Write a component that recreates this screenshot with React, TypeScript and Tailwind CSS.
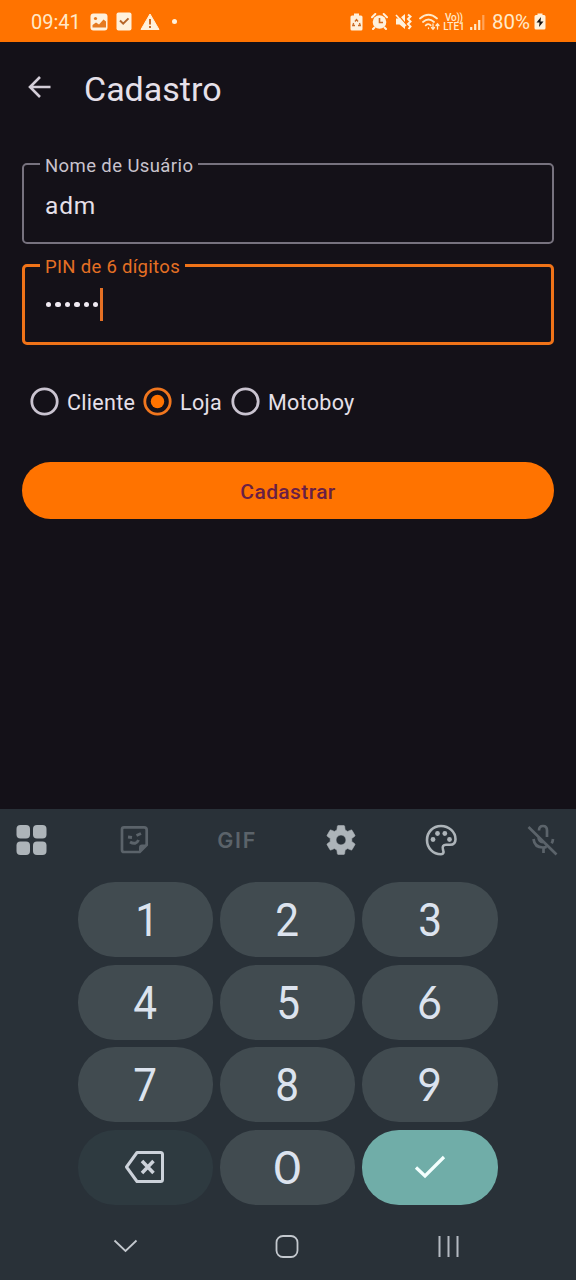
import { useState } from 'react';
import type { ReactNode } from 'react';

const roles = [
  { name: 'Cliente', className: 'w-[113px]' },
  { name: 'Loja', className: 'w-[88px]' },
  { name: 'Motoboy', className: '' },
];

const digits = [
  { label: '1', className: "scale-x-90 pl-[3px] font-['Roboto']" },
  { label: '2', className: "scale-x-90 font-['Roboto']" },
  { label: '3', className: "scale-x-90 font-['Roboto']" },
  { label: '4', className: "scale-x-90 font-['Roboto']" },
  { label: '5', className: "scale-x-90 pl-px font-['Roboto']" },
  { label: '6', className: "scale-x-90 pb-[2px] font-['Lato']" },
  { label: '7', className: "scale-x-90 font-['Roboto']" },
  { label: '8', className: "scale-x-90 font-['Roboto']" },
  { label: '9', className: "scale-x-90 pb-[2px] font-['Lato']" },
];

function StatusBar() {
  return (
    <div className="flex h-[42px] items-center bg-[#ff7300] pl-[31px] pr-[30px] pt-px text-[#ffe9c8]">
      <span className="w-[59px] text-[20px] leading-none">09:41</span>
      <svg className="mr-[8px] h-[18px] w-[18px]" viewBox="0 0 18 18">
        <rect x="0.500" y="0.500" width="17" height="17" rx="3" fill="#fff1dc" />
        <circle cx="5.500" cy="5.500" r="1.600" fill="#e57a20" />
        <path d="M2.500 14.500V12l3.500-2.500 3 2 4.500-5L16 8.500v6z" fill="#e57a20" />
      </svg>
      <svg className="mr-[8px] h-[19px] w-[16px]" viewBox="0 0 16 19">
        <rect x="0.500" y="0.500" width="15" height="18" rx="2" fill="#fff1dc" />
        <path d="M4 8.500l3.200 3.200 5.300-5.300" fill="none" stroke="#b5652a" strokeWidth="2" />
      </svg>
      <svg className="mr-[12px] h-[18px] w-[20px]" viewBox="0 0 20 18">
        <path d="M10 1l9 15.500H1z" fill="#fff1dc" stroke="#fff1dc" strokeLinejoin="round" />
        <path d="M10 6v5.500M10 13v2" stroke="#c96a24" strokeWidth="2" />
      </svg>
      <span className="h-[5px] w-[5px] rounded-full bg-[#fff1dc]" />

      <div className="ml-auto flex items-center">
        <svg className="mr-[8px] h-[18px] w-[13px]" viewBox="0 0 13 18">
          <path d="M4 0.500h5v2h2q1.500 0 1.500 1.500v12q0 1.500-1.500 1.500h-9q-1.500 0-1.500-1.500V4q0-1.500 1.500-1.500h2z" fill="#fff1dc" />
          <path d="M5 8.500l1.500-2 1.500 2M9.500 10l.8 2.500H8M5 12.500H2.800L3.600 10" fill="none" stroke="#c96a24" strokeWidth="1.300" />
        </svg>
        <svg className="mr-[7px] h-[17px] w-[17px]" viewBox="0 0 17 17">
          <circle cx="8.500" cy="9" r="6.800" fill="#fff1dc" />
          <path d="M1 4.200L4.300 1M16 4.200L12.700 1M3.500 14.500L2 16M13.500 14.500L15 16" stroke="#fff1dc" strokeWidth="2" strokeLinecap="round" />
          <path d="M8.500 5v4.500H12" fill="none" stroke="#d46b1c" strokeWidth="1.600" />
        </svg>
        <svg className="mr-[7px] h-[17px] w-[17px]" viewBox="0 0 17 17">
          <path d="M1 5.500h3.500L10 1v15l-5.500-4.500H1z" fill="#fff1dc" />
          <path d="M3 1.500l9 11" stroke="#ff7300" strokeWidth="1.200" />
          <path d="M1 2l10 11" stroke="#fff1dc" strokeWidth="1.600" />
          <path d="M13 1.500l2.500 2-2.500 2.500 2.500 2.500L13 11l2.500 2.500L13.500 16" fill="none" stroke="#fff1dc" strokeWidth="2" />
        </svg>
        <svg className="mr-[3px] h-[18px] w-[21px]" viewBox="0 0 21 18" fill="none" stroke="#ffe9c8" strokeWidth="1.800" strokeLinecap="round">
          <path d="M1 5.500q8.500-7.500 17 0M4 9q5.500-5 11 0M6.700 12.300q2.800-2.500 5 0" />
          <path d="M9.500 15v.5M14 11v5M12.500 14.500l1.500 1.700 1.500-1.700M18.500 16v-5M17 12.500l1.500-1.700 1.500 1.700" strokeWidth="1.300" />
        </svg>
        <span className="mr-[5px] flex w-[22px] flex-col items-center text-[10px] font-medium leading-[9px]">
          <span className="tracking-[-0.300px]">Vo))</span>
          <span>LTE1</span>
        </span>
        <svg className="mr-[7px] h-[16px] w-[15px]" viewBox="0 0 15 16" strokeWidth="2.200">
          <path d="M1.200 16v-3M5.200 16v-6M9.200 16V6" stroke="#ffe9c8" />
          <path d="M13.300 16V1" stroke="#ffa45a" />
        </svg>
        <span className="mr-[4px] pt-[2px] text-[20.500px] leading-none">80%</span>
        <svg className="h-[17px] w-[12px]" viewBox="0 0 12 17">
          <path d="M3.500 0.500h5v1.500h1.500q1.500 0 1.500 1.500v11.500q0 1.500-1.500 1.500H2q-1.500 0-1.500-1.500V3.500Q.5 2 2 2h1.500z" fill="#fff1dc" />
          <path d="M7 4L2.500 9.500h3L5 14l4.500-5.500h-3z" fill="#1b1410" />
        </svg>
      </div>
    </div>
  );
}

function Key({ children, className }: { children: ReactNode; className: string }) {
  return (
    <button className={`flex h-[75px] items-center justify-center rounded-[37px] text-[47px] leading-none text-[#dce3ee] ${className}`}>
      {children}
    </button>
  );
}

function Keyboard() {
  return (
    <div className="h-[471px] bg-[#293138]">
      {/* Toolbar */}
      <div className="flex h-[62px] items-center justify-between pl-[16px] pr-[17px]">
        <svg className="h-[30px] w-[31px]" viewBox="0 0 31 30" fill="#adb4b9">
          <rect x="0.500" width="13.500" height="13.500" rx="4" />
          <rect x="17" width="13.500" height="13.500" rx="4" />
          <rect x="0.500" y="16.500" width="13.500" height="13.500" rx="4" />
          <rect x="17" y="16.500" width="13.500" height="13.500" rx="4" />
        </svg>
        <svg className="ml-[6px] h-[30px] w-[30px]" viewBox="0 0 30 30" fill="none" stroke="#5b636a" strokeWidth="2.700">
          <path d="M4 2.300h20q2.700 0 2.700 2.700v15l-7 7H4q-2 0-2-2V4.300q0-2 2-2z" />
          <path d="M27 19.500h-5q-3 0-3 3V27z" fill="#5b636a" stroke="none" />
          <path d="M8 12l4 .5M16.500 10.500l4.500-2M10 17q6 3.500 8.500-2" strokeWidth="3" />
        </svg>
        <span className="w-[40px] whitespace-nowrap pl-px text-center font-['Inter'] text-[21.500px] font-semibold tracking-[1.800px] text-[#5b636a]">GIF</span>
        <svg className="h-[36px] w-[36px]" viewBox="0 0 24 24" fill="#adb4b9">
          <path d="M19.140 12.940c.04-.3.06-.61.06-.94s-.02-.64-.07-.94l2.030-1.580c.18-.14.23-.41.12-.61l-1.920-3.320c-.12-.22-.37-.29-.59-.22l-2.390.96c-.5-.38-1.030-.7-1.620-.94l-.36-2.540c-.04-.24-.24-.41-.48-.41h-3.840c-.24 0-.43.17-.47.41l-.36 2.540c-.59.24-1.130.57-1.620.94l-2.390-.96c-.22-.08-.47 0-.59.22L2.740 8.870c-.12.21-.08.47.12.61l2.030 1.580c-.05.3-.09.63-.09.94s.02.64.07.94l-2.030 1.580c-.18.14-.23.41-.12.61l1.920 3.320c.12.22.37.29.59.22l2.390-.96c.5.38 1.030.7 1.620.94l.36 2.540c.05.24.24.41.48.41h3.840c.24 0 .44-.17.47-.41l.36-2.540c.59-.24 1.130-.56 1.620-.94l2.390.96c.22.08.47 0 .59-.22l1.920-3.320c.12-.22.07-.47-.12-.61l-2.010-1.580zM12 15.300c-1.820 0-3.300-1.480-3.300-3.300s1.480-3.300 3.300-3.300 3.300 1.480 3.300 3.300-1.480 3.300-3.300 3.300z" stroke="#adb4b9" strokeWidth="0.400" />
        </svg>
        <svg className="h-[32px] w-[32px]" viewBox="0 0 32 32" fill="none" stroke="#adb4b9" strokeWidth="2.600">
          <path d="M16 2C8 2 2 8 2 16s6 14.300 14 14.300c2.500 0 3-2 2-4.500-1.200-3.500.5-5 3-5h4c3.500 0 5.500-2 5.500-5.500C30.500 8 24 2 16 2z" />
          <g fill="#adb4b9" stroke="none">
            <circle cx="8" cy="15.500" r="2.400" />
            <circle cx="12.500" cy="9.500" r="2.400" />
            <circle cx="19.800" cy="9.500" r="2.400" />
            <circle cx="24.500" cy="15.500" r="2.400" />
          </g>
        </svg>
        <svg className="ml-[3px] h-[32px] w-[32px]" viewBox="0 0 32 32" fill="none" stroke="#5b636a" strokeWidth="2.700">
          <path d="M1.500 3l28 27.500M12 6.500q0-4.500 4-4.500T20 6.500v6.500M6.500 15q1 8.500 9.500 8.500 2 0 3.500-.8M16.500 23v6M26 15q-.3 2.500-1.300 4.300M11.500 13.500q.5 4 4.500 4.800" />
        </svg>
      </div>

      {/* Keys */}
      <div className="mt-[11px] grid grid-cols-[135px_135px_136px] gap-x-[7px] gap-y-[7.670px] pl-[78px]">
        {digits.map((digit) => (
          <Key key={digit.label} className="bg-[#414b50]">
            <span className={digit.className}>{digit.label}</span>
          </Key>
        ))}
        <Key className="bg-[#2e3a40]">
          <svg className="h-[34px] w-[42px]" viewBox="0 0 42 34" fill="none" stroke="#ccd2da" strokeWidth="3" strokeLinejoin="round">
            <path d="M12 2.500H35.500q2 0 2 2v25q0 2-2 2H12L1.500 17z" />
            <path d="M17 11l11.500 12M28.500 11L17 23" strokeWidth="3.500" />
          </svg>
        </Key>
        <Key className="bg-[#414b50]">
          <span className="pb-[2px] font-['Lato']">0</span>
        </Key>
        <Key className="bg-[#70ada8]">
          <svg className="h-[24px] w-[32px]" viewBox="0 0 32 24" fill="none" stroke="#f4fffe" strokeWidth="3.200">
            <path d="M2 12.500l9 8.500L30 2" />
          </svg>
        </Key>
      </div>

      {/* Navigation */}
      <div className="mt-[28px] flex items-center justify-between pl-[113px] pr-[115px]">
        <svg className="h-[26px] w-[25px]" viewBox="0 0 25 26" fill="none" stroke="#c3c8ce" strokeWidth="1.800">
          <path d="M1.500 7.500l11 10.500 11-10.500" />
        </svg>
        <svg className="h-[26px] w-[26px]" viewBox="0 0 26 26" fill="none" stroke="#c3c8ce" strokeWidth="1.800">
          <rect x="2.500" y="3" width="21" height="21" rx="6.500" />
        </svg>
        <svg className="h-[26px] w-[26px]" viewBox="0 0 26 26" stroke="#b4bac1" strokeWidth="2">
          <path d="M4.500 3v21M13.500 3v21M22.500 3v21" />
        </svg>
      </div>
    </div>
  );
}

export default function App() {
  const [role, setRole] = useState('Loja');

  return (
    <div className="flex h-[1280px] w-[576px] flex-col overflow-hidden bg-[#141118] font-['Roboto',sans-serif]">
      <StatusBar />

      {/* Header */}
      <header className="flex h-[92px] items-center pl-[28px]">
        <svg className="mb-[2px] h-[24px] w-[24px]" viewBox="0 0 24 24" fill="none" stroke="#d3cdd7" strokeWidth="2.600">
          <path d="M22.500 12H2.500M12 2L2 12l10 10" />
        </svg>
        <h1 className="ml-[32px] mt-[2px] text-[34px] leading-none text-[#e6e0e9]">Cadastro</h1>
      </header>

      <main className="flex-1 px-[22px] pt-[21px]">
        <fieldset className="h-[89px] w-[532px] rounded-[5px] border-2 border-[#77727e] pl-[16px]">
          <legend className="px-[5px] text-[18.500px] leading-[18px] tracking-[0.400px] text-[#c9c3cd]">
            <span className="relative top-[1.500px]">Nome de Usuário</span>
          </legend>
          <p className="pl-[5px] pt-[19px] text-[24.500px] leading-[28px] tracking-[0.800px] text-[#e6e0e9]">adm</p>
        </fieldset>

        <fieldset className="mt-[12px] h-[89px] w-[532px] rounded-[5px] border-[3px] border-[#f07318] pl-[15px]">
          <legend className="px-[5px] text-[18.500px] leading-[18px] tracking-[0.300px] text-[#e57024]">
            <span className="relative top-[1.500px]">PIN de 6 dígitos</span>
          </legend>
          <div className="flex items-center pl-[6px] pt-[14px]">
            <div className="flex gap-[4px]">
              {[0, 1, 2, 3, 4, 5].map((dot) => (
                <span key={dot} className="h-[5.400px] w-[5.400px] rounded-full bg-[#f0eaf2]" />
              ))}
            </div>
            <span className="ml-[2px] h-[33px] w-[3px] bg-[#e57024]" />
          </div>
        </fieldset>

        {/* Roles */}
        <div className="mt-[41px] flex items-center pl-[8px]">
          {roles.map(({ name, className }) => (
            <button key={name} onClick={() => setRole(name)} className={`flex items-center ${className}`}>
              <svg className="h-[29px] w-[29px] shrink-0" viewBox="0 0 29 29">
                <circle cx="14.500" cy="14.500" r="12.700" fill="none" stroke={role === name ? '#f0761e' : '#cac4d0'} strokeWidth="2.800" />
                {role === name && <circle cx="14.500" cy="14.500" r="6.700" fill="#ff7300" />}
              </svg>
              <span className="ml-[8px] mt-[2px] text-[21.500px] leading-[29px] tracking-[0.300px] text-[#e6e0e9]">{name}</span>
            </button>
          ))}
        </div>

        <button className="mt-[45px] h-[57px] w-[532px] rounded-full bg-[#ff7300] pt-[4px] text-[21px] font-medium tracking-[0.400px] text-[#6a1f45]">
          Cadastrar
        </button>
      </main>

      <Keyboard />
    </div>
  );
}
